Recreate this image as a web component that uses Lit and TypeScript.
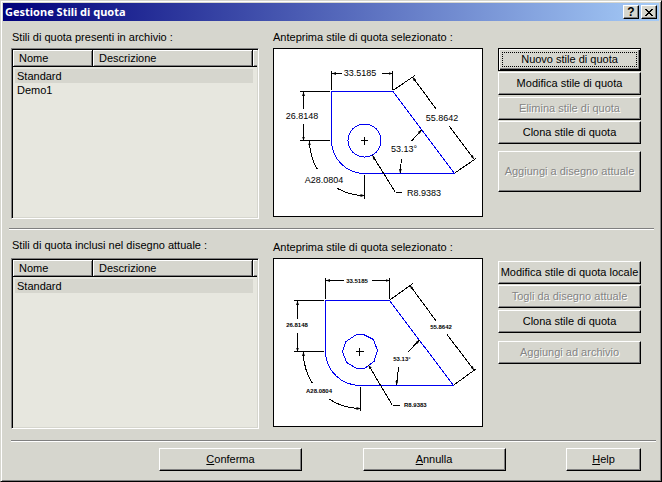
import { LitElement, html, svg, css } from "lit";
import { customElement, property, state } from "lit/decorators.js";
import { classMap } from "lit/directives/class-map.js";

interface DimStyle {
  name: string;
  description: string;
}

interface Label {
  x: number;
  y: number;
  text: string;
  anchor?: string;
}

interface Drawing {
  outline: string;
  hole: string;
  cross: string;
  lines: string;
  arrows: string[];
  labels: Label[];
  size: string;
}

const DRAWINGS: Record<string, Drawing> = {
  large: {
    outline: "M58.5 43.5H120L181.5 125.5H91.5A33 33 0 0 1 58.5 92.5Z",
    hole: "M75 92.5a16.5 16.5 0 1 0 33 0a16.5 16.5 0 1 0 -33 0Z",
    cross: "M87.5 92.5H95M91.5 89V97",
    lines:
      "M58.5 22.5V41.5M119.5 22.5V41.5M26.5 43.5H57M26.5 92.5H57M91.5 126.5V151" +
      "M120.5 42L142 27.5M182.5 124.5L203 110.5M122.5 144.5H129",
    arrows: [
      "M69 25.5H59",
      "M109 25.5H119.5",
      "M30.5 60.5V44",
      "M30.5 76V92.5",
      "M44.5 121.5A55 55 0 0 1 36.5 93.5",
      "M64.5 140.5A55 55 0 0 0 91.5 147.5",
      "M122.5 144.5L99.5 107.5",
      "M138.5 93L148.5 82",
      "M128.5 111L127 125",
      "M163.5 61.5L139.5 29",
      "M176.5 78.5L201 111",
    ],
    labels: [
      { x: 87, y: 28, text: "33.5185" },
      { x: 29, y: 71, text: "26.8148" },
      { x: 51, y: 135, text: "A28.0804" },
      { x: 134, y: 148, text: "R8.9383", anchor: "start" },
      { x: 131, y: 104, text: "53.13°" },
      { x: 169, y: 73, text: "55.8642" },
    ],
    size: "large",
  },
  small: {
    outline: "M52.5 42.5H116.5L180.5 127.5H87.5A35 34 0 0 1 52.5 93.5Z",
    hole: "M83.5 76.5H90.5L100.5 81.5L104.5 92.5L101 103.5L91.5 110.5L83 110L73.5 104.5L69.5 93.5L73 83.5Z",
    cross: "M83 93.5H90.5M86.5 90V98",
    lines:
      "M52.5 20V40.5M116.5 20V40.5M21 42.5H51M21 93.5H51M87.5 129V153" +
      "M117.5 41.5L140 25.5M181.5 126.5L203.5 110.5M119.5 147.5H126.5",
    arrows: [
      "M71 22.5H53",
      "M99 22.5H116.5",
      "M24.5 61V43",
      "M24.5 74.5V93.5",
      "M39.5 125.5A57 57 0 0 1 30.5 94",
      "M56 141A57 57 0 0 0 87.5 150.5",
      "M119.5 147.5L95.5 107",
      "M134.5 94.5L146.5 82",
      "M125.5 109.5L123.5 127",
      "M163.5 63.5L137 27.5",
      "M174 76.5L201 112",
    ],
    labels: [
      { x: 84, y: 25, text: "33.5185" },
      { x: 24, y: 69, text: "26.8148" },
      { x: 46, y: 135, text: "A28.0804" },
      { x: 131, y: 149, text: "R8.9383", anchor: "start" },
      { x: 129, y: 103, text: "53.13°" },
      { x: 168, y: 71, text: "55.8642" },
    ],
    size: "small",
  },
};

@customElement("style-preview")
export class StylePreview extends LitElement {
  @property() drawing = "large";

  static styles = css`
    :host {
      display: block;
      border: 1px solid #000;
      background: #fff;
    }
    .sheet {
      display: block;
      width: 100%;
      height: auto;
    }
    .part {
      fill: none;
      stroke: #0000f0;
    }
    .dim {
      fill: none;
      stroke: #000;
    }
    .label {
      font-family: "Liberation Sans", Arial, sans-serif;
      fill: #000;
    }
    .large {
      font-size: 9px;
    }
    .small {
      font-size: 6px;
      font-weight: bold;
    }
  `;

  render() {
    const d = DRAWINGS[this.drawing];
    return html`<svg class="sheet" viewBox="1 1 208 167" role="img" aria-label="Anteprima">
      <defs>
        <marker id="arrow" viewBox="0 0 4 3" refX="4" refY="1.5" markerWidth="4" markerHeight="3"
          orient="auto" markerUnits="userSpaceOnUse"><path d="M0 0L4 1.5L0 3Z" /></marker>
      </defs>
      <g shape-rendering="crispEdges">
        <path class="part" d=${d.outline} />
        <path class="part" d=${d.hole} />
        <path class="dim" d=${d.cross} />
        <path class="dim" d=${d.lines} />
        ${d.arrows.map((a) => svg`<path class="dim" d=${a} marker-end="url(#arrow)" />`)}
      </g>
      ${d.labels.map(
        (l) => svg`<text class="label ${d.size}" x=${l.x} y=${l.y}
          text-anchor=${l.anchor ?? "middle"}>${l.text}</text>`
      )}
    </svg>`;
  }
}

@customElement("style-list")
export class StyleList extends LitElement {
  @property({ attribute: false }) rows: DimStyle[] = [];
  @property() label = "";
  @state() private selected = 0;

  static styles = css`
    :host {
      display: block;
      box-sizing: border-box;
      min-height: 171px;
      border: 1px solid;
      border-color: #808080 #fff #fff #808080;
      background: #e7e7df;
      box-shadow: inset 1px 1px #000, inset -1px -1px #d6d6ce;
      padding: 1px;
    }
    .grid {
      width: 100%;
      table-layout: fixed;
      border-collapse: separate;
      border-spacing: 0;
      cursor: default;
    }
    .name {
      width: 80px;
    }
    .rest {
      width: 4px;
    }
    .head {
      box-sizing: border-box;
      height: 17px;
      padding: 0 6px;
      background: #d6d6ce;
      border-right: 1px solid #000;
      border-bottom: 1px solid #000;
      box-shadow: inset 1px 1px #fff, inset -1px -1px #808080;
      font-weight: normal;
      line-height: 16px;
      text-align: left;
    }
    .head.rest {
      padding: 0;
      border-right: 0;
      box-shadow: inset 1px 1px #fff, inset 0 -1px #808080;
    }
    .cell {
      height: 14px;
      padding: 0 2px;
      line-height: 14px;
      overflow: hidden;
      white-space: nowrap;
    }
    .cell:first-child {
      border-left: 2px solid #e7e7df;
    }
    .row:first-child .cell {
      border-top: 2px solid #e7e7df;
    }
    .selected .cell {
      background: #d6d6ce;
    }
  `;

  render() {
    return html`<table class="grid" aria-label=${this.label}>
      <thead>
        <tr>
          <th class="head name" scope="col">Nome</th>
          <th class="head" scope="col">Descrizione</th>
          <td class="head rest"></td>
        </tr>
      </thead>
      <tbody>
        ${this.rows.map(
          (r, i) => html`<tr
            class=${classMap({ row: true, selected: i === this.selected })}
            @click=${() => (this.selected = i)}
          >
            <td class="cell">${r.name}</td>
            <td class="cell">${r.description}</td>
          </tr>`
        )}
      </tbody>
    </table>`;
  }
}

@customElement("app-root")
export class AppRoot extends LitElement {
  static styles = css`
    :host {
      display: block;
      font: 11px "Liberation Sans", Arial, sans-serif;
      color: #000;
    }
    .window {
      display: flex;
      flex-direction: column;
      box-sizing: border-box;
      min-height: 100vh;
      padding: 2px;
      background: #d6d6ce;
      border: 1px solid;
      border-color: #d6d6ce #000 #000 #d6d6ce;
      box-shadow: inset 1px 1px #fff, inset -1px -1px #808080;
    }
    .titlebar {
      display: flex;
      align-items: center;
      gap: 2px;
      height: 18px;
      padding: 0 2px;
      background: linear-gradient(to right, #00007b, #a5cbf7);
    }
    .title {
      flex: 1;
      margin: 0;
      color: #fff;
      font: bold 11px/18px "Noto Sans", sans-serif;
    }
    .btn {
      position: relative;
      box-sizing: border-box;
      height: 23px;
      padding: 0 0 2px;
      border: 1px solid;
      border-color: #fff #000 #000 #fff;
      border-radius: 0;
      background: #d6d6ce;
      box-shadow: inset -1px -1px #808080;
      color: #000;
      font: inherit;
      white-space: nowrap;
    }
    .btn:disabled {
      color: #848484;
      text-shadow: 1px 1px #fff;
    }
    .btn.caption {
      display: flex;
      align-items: center;
      justify-content: center;
      width: 16px;
      height: 14px;
      padding: 0;
      font-size: 12px;
      font-weight: bold;
      line-height: 12px;
    }
    .btn.default {
      border-color: #000;
      box-shadow: inset 1px 1px #fff, inset -1px -1px #000, inset -2px -2px #808080;
    }
    .btn.default::after {
      content: "";
      position: absolute;
      inset: 3px;
      border: 1px dotted #000;
    }
    .btn.tall {
      height: 41px;
      margin-top: 6px;
    }
    .btn.spaced {
      margin-top: 1px;
    }
    .btn.apart {
      margin-top: 7px;
    }
    .panel {
      display: grid;
      grid-template-columns: minmax(0, 248fr) minmax(0, 210fr) minmax(0, 144fr);
      column-gap: 14px;
      padding: 9px 18px 0 8px;
    }
    .panel.local {
      padding-top: 8px;
    }
    .caption-text {
      margin: 0 0 4px;
      padding-left: 1px;
      font: inherit;
      line-height: 14px;
      white-space: nowrap;
    }
    .preview .caption-text {
      padding-left: 0;
    }
    .local .list .caption-text {
      margin-bottom: 6px;
    }
    .local .preview {
      padding-top: 2px;
    }
    .actions {
      display: flex;
      flex-direction: column;
      gap: 1px;
      padding: 18px 0 0 1px;
    }
    .local .actions {
      padding-top: 23px;
    }
    .rule {
      height: 0;
      margin: 9px 5px 0 6px;
      border: 0;
      border-top: 1px solid #808080;
      border-bottom: 1px solid #fff;
    }
    .rule.last {
      margin: 11px 3px 0 8px;
    }
    .footer {
      display: flex;
      justify-content: space-between;
      padding: 6px 18px 8px 156px;
    }
    .wide {
      width: 143px;
    }
    .narrow {
      width: 75px;
    }
  `;

  private archive: DimStyle[] = [
    { name: "Standard", description: "" },
    { name: "Demo1", description: "" },
  ];
  private local: DimStyle[] = [{ name: "Standard", description: "" }];

  render() {
    return html`<main class="window">
      <header class="titlebar">
        <h1 class="title">Gestione Stili di quota</h1>
        <button class="btn caption" aria-label="Guida">?</button>
        <button class="btn caption" aria-label="Chiudi">
          <svg width="8" height="7" viewBox="0 0 8 7" shape-rendering="crispEdges" aria-hidden="true">
            <path d="M0 0h2v1h1v1h2v-1h1v-1h2v1h-1v1h-1v1h-1v1h1v1h1v1h1v1h-2v-1h-1v-1h-2v1h-1v1h-2v-1h1v-1h1v-1h1v-1h-1v-1h-1v-1h-1z" />
          </svg>
        </button>
      </header>

      <section class="panel">
        <div class="list">
          <h2 class="caption-text">Stili di quota presenti in archivio :</h2>
          <style-list label="Stili in archivio" .rows=${this.archive}></style-list>
        </div>
        <div class="preview">
          <h2 class="caption-text">Anteprima stile di quota selezionato :</h2>
          <style-preview drawing="large"></style-preview>
        </div>
        <div class="actions">
          <button class="btn default">Nuovo stile di quota</button>
          <button class="btn">Modifica stile di quota</button>
          <button class="btn spaced" disabled>Elimina stile di quota</button>
          <button class="btn">Clona stile di quota</button>
          <button class="btn tall" disabled>Aggiungi a disegno attuale</button>
        </div>
      </section>

      <hr class="rule" />

      <section class="panel local">
        <div class="list">
          <h2 class="caption-text">Stili di quota inclusi nel disegno attuale :</h2>
          <style-list label="Stili nel disegno" .rows=${this.local}></style-list>
        </div>
        <div class="preview">
          <h2 class="caption-text">Anteprima stile di quota selezionato :</h2>
          <style-preview drawing="small"></style-preview>
        </div>
        <div class="actions">
          <button class="btn">Modifica stile di quota locale</button>
          <button class="btn" disabled>Togli da disegno attuale</button>
          <button class="btn spaced">Clona stile di quota</button>
          <button class="btn apart" disabled>Aggiungi ad archivio</button>
        </div>
      </section>

      <hr class="rule last" />

      <footer class="footer">
        <button class="btn wide"><u>C</u>onferma</button>
        <button class="btn wide"><u>A</u>nnulla</button>
        <button class="btn narrow"><u>H</u>elp</button>
      </footer>
    </main>`;
  }
}
